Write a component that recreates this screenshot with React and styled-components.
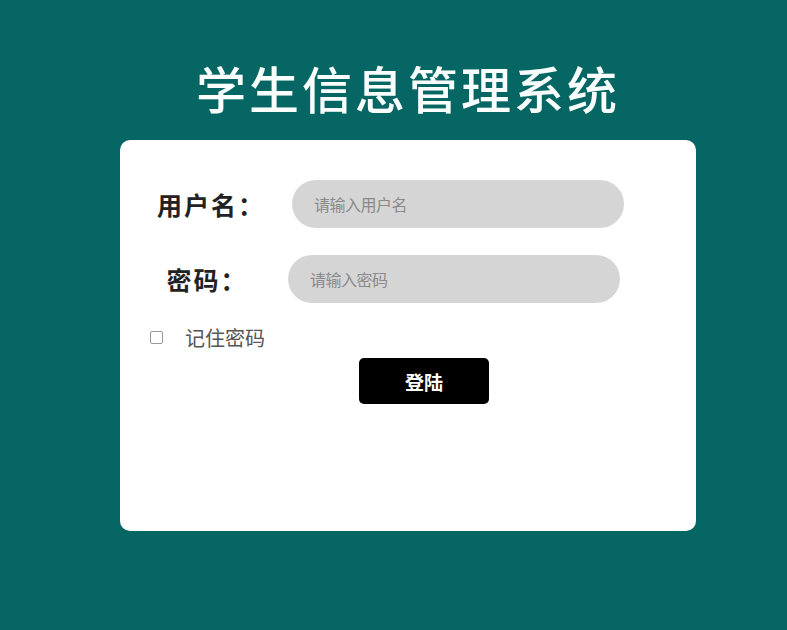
import React from 'react'
import styled, { createGlobalStyle } from 'styled-components'

const GlobalStyle = createGlobalStyle`
  html, body {
    margin: 0;
    padding: 0;
    background: #066663;
  }
  body {
    font-family: 'Noto Sans CJK SC', 'Noto Sans', sans-serif;
  }
`

const Page = styled.div`
  width: 787px;
  height: 630px;
  background: #066663;
  display: flex;
  flex-direction: column;
  padding: 55px 0 0 120px;
  box-sizing: border-box;
`

const Title = styled.h1`
  margin: 0;
  width: 576px;
  text-align: center;
  color: #fafffe;
  font-size: 50px;
  font-weight: 500;
  line-height: 64px;
  letter-spacing: 3px;
`

const Card = styled.div`
  margin-top: 21px;
  width: 576px;
  height: 391px;
  background: #fff;
  border-radius: 10px;
  box-sizing: border-box;
  padding: 40px 0 0 24px;
  display: flex;
  flex-direction: column;
`

const Row = styled.div`
  display: flex;
  align-items: center;
  margin-bottom: ${p => p.gap || 0}px;
`

const Label = styled.label`
  width: 134px;
  text-align: center;
  font-size: 25px;
  font-weight: 700;
  color: #222;
  letter-spacing: 2px;
  margin-left: ${p => p.shift || 0}px;
`

const Input = styled.input`
  margin-left: ${p => p.offset || 16}px;
  width: 332px;
  height: 48px;
  border: none;
  outline: none;
  border-radius: 24px;
  background: #d5d5d5;
  padding: 0 22px;
  box-sizing: border-box;
  font-family: inherit;
  font-size: 16px;
  letter-spacing: -0.5px;
  color: #333;
  &::placeholder {
    color: #8a8a8a;
  }
`

const CheckRow = styled.label`
  display: flex;
  align-items: center;
  margin: 20px 0 0 6px;
  font-size: 20px;
  color: #555;
`

const Box = styled.input`
  margin: 0 22px 0 0;
  width: 13px;
  height: 13px;
  appearance: none;
  border: 1.5px solid #999;
  border-radius: 2px;
  background: #fff;
`

const Button = styled.button`
  align-self: flex-start;
  margin: 6px 0 0 215px;
  width: 130px;
  height: 46px;
  background: #000;
  color: #fff;
  border: none;
  border-radius: 5px;
  font-family: inherit;
  font-size: 19px;
  font-weight: 700;
  cursor: pointer;
`

export default function App() {
  return (
    <>
      <GlobalStyle />
      <Page>
        <Title>学生信息管理系统</Title>
        <Card>
          <Row gap={27}>
            <Label>用户名：</Label>
            <Input type="text" placeholder="请输入用户名" offset={14} />
          </Row>
          <Row>
            <Label shift={-4}>密码：</Label>
            <Input type="password" placeholder="请输入密码" offset={14} />
          </Row>
          <CheckRow>
            <Box type="checkbox" />
            记住密码
          </CheckRow>
          <Button>登陆</Button>
        </Card>
      </Page>
    </>
  )
}
